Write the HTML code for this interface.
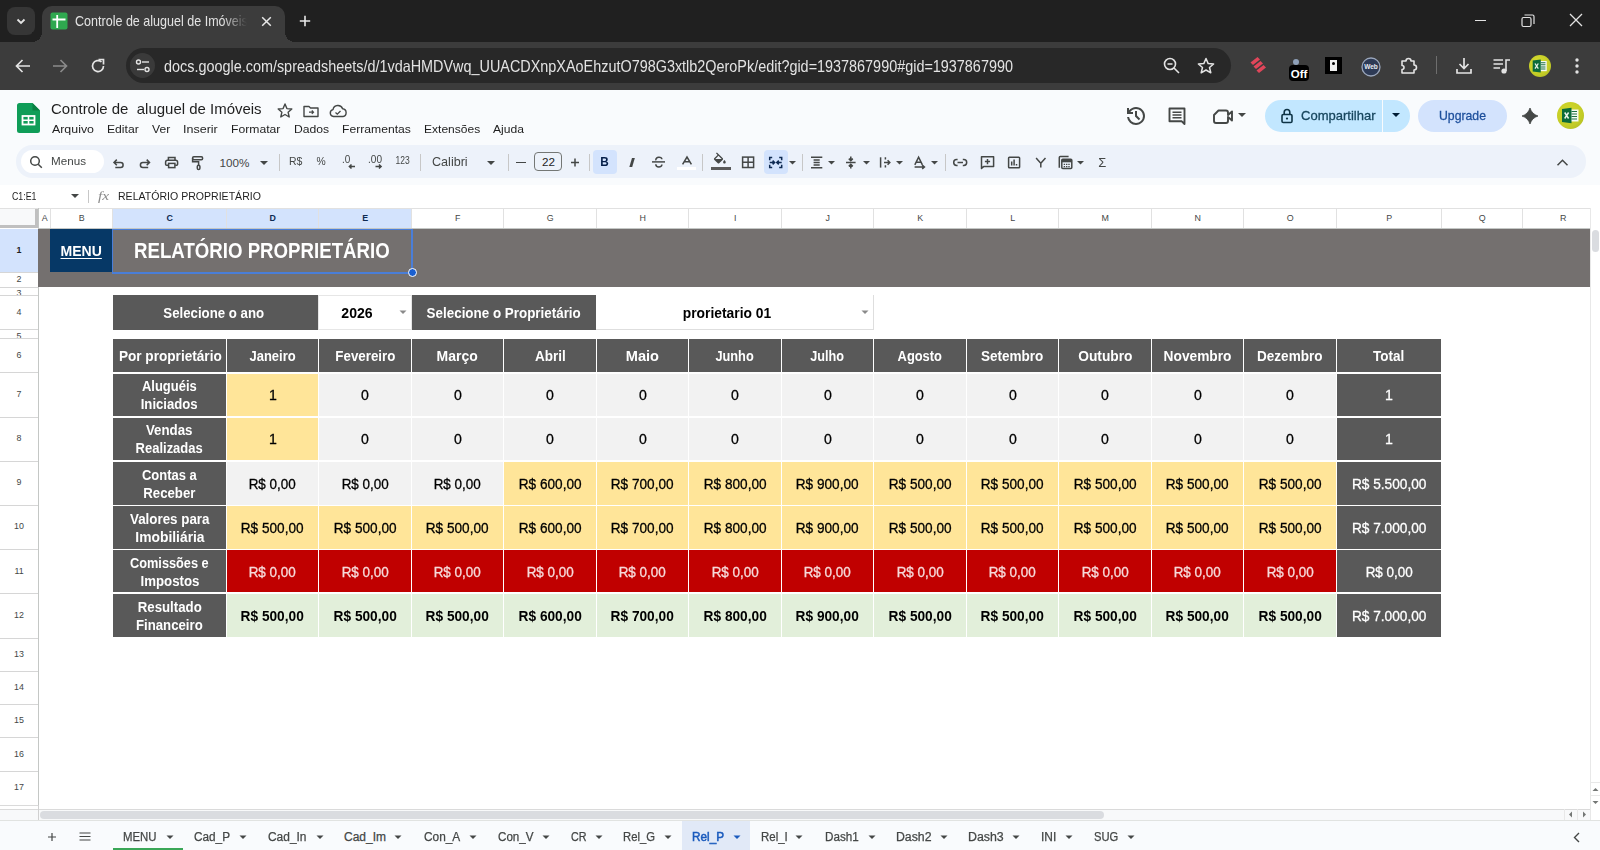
<!DOCTYPE html>
<html><head><meta charset="utf-8"><style>
html,body{margin:0;padding:0;}
body{width:1600px;height:850px;position:relative;overflow:hidden;background:#fff;font-family:"Liberation Sans",sans-serif;}
.a{position:absolute;}
.t{position:absolute;white-space:pre;}
svg{overflow:visible;}
</style></head><body>
<div class="a" style="left:0px;top:0px;width:1600px;height:42px;background:#202020;"></div>
<div class="a" style="left:0px;top:42px;width:1600px;height:48px;background:#3c3c3c;"></div>
<div class="a" style="left:7px;top:7px;width:28px;height:28px;background:#363636;border-radius:8px;"></div>
<svg class="a" style="left:14px;top:14px;" width="14" height="14" viewBox="0 0 14 14"><path d="M3.5 5.5 L7 9 L10.5 5.5" stroke="#e3e3e3" stroke-width="1.8" fill="none"/></svg>
<div class="a" style="left:42px;top:6px;width:243px;height:40px;background:#3c3c3c;border-radius:10px 10px 0 0;"></div>
<div class="a" style="left:32px;top:32px;width:10px;height:10px;background:radial-gradient(circle at 0 0, #202020 10px, #3c3c3c 10px);"></div>
<div class="a" style="left:285px;top:32px;width:10px;height:10px;background:radial-gradient(circle at 10px 0, #202020 10px, #3c3c3c 10px);"></div>
<svg class="a" style="left:50px;top:12px;" width="18" height="18" viewBox="0 0 18 18"><rect x="0.5" y="0.5" width="17" height="17" rx="2" fill="#2fa84f"/><path d="M7.2 3 V16 M2.5 7.5 H15.5" stroke="#fff" stroke-width="1.8"/></svg>
<div class="a" style="left:75px;top:8px;width:172px;height:24px;overflow:hidden;-webkit-mask-image:linear-gradient(90deg,#000 86%,transparent 100%);"><div class="t" style="left:0;top:5.8px;font-size:14.4px;line-height:14.4px;color:#e3e3e3;transform:scaleX(0.8714);transform-origin:left;">Controle de aluguel de Imóveis</div></div>
<svg class="a" style="left:261px;top:15.5px;" width="11" height="11" viewBox="0 0 11 11"><path d="M1.2 1.2 L9.8 9.8 M9.8 1.2 L1.2 9.8" stroke="#e8e8e8" stroke-width="1.5"/></svg>
<svg class="a" style="left:299px;top:15px;" width="12" height="12" viewBox="0 0 12 12"><path d="M6 0.8 V11.2 M0.8 6 H11.2" stroke="#e8e8e8" stroke-width="1.6"/></svg>
<div class="a" style="left:1475px;top:20px;width:11px;height:1.2px;background:#e3e3e3;"></div>
<svg class="a" style="left:1521px;top:14px;" width="14" height="14" viewBox="0 0 14 14"><rect x="1" y="3.5" width="9" height="9" rx="1.5" stroke="#e3e3e3" stroke-width="1.2" fill="none"/><path d="M3.5 1 H11.5 a1.5 1.5 0 0 1 1.5 1.5 V10" stroke="#e3e3e3" stroke-width="1.2" fill="none"/></svg>
<svg class="a" style="left:1569px;top:13px;" width="14" height="14" viewBox="0 0 14 14"><path d="M1 1 L13 13 M13 1 L1 13" stroke="#e3e3e3" stroke-width="1.3"/></svg>
<svg class="a" style="left:13px;top:56px;" width="20" height="20" viewBox="0 0 20 20"><path d="M17 10 H3.5 M9.5 4 L3.5 10 L9.5 16" stroke="#e3e3e3" stroke-width="1.7" fill="none"/></svg>
<svg class="a" style="left:50px;top:56px;" width="20" height="20" viewBox="0 0 20 20"><path d="M3 10 H16.5 M10.5 4 L16.5 10 L10.5 16" stroke="#8a8a8a" stroke-width="1.7" fill="none"/></svg>
<svg class="a" style="left:88px;top:56px;" width="20" height="20" viewBox="0 0 20 20"><path d="M15.5 10 A5.5 5.5 0 1 1 13.5 5.8" stroke="#e3e3e3" stroke-width="1.7" fill="none"/><path d="M10.5 3.5 H15.5 V8.5" stroke="#e3e3e3" stroke-width="1.7" fill="none"/></svg>
<div class="a" style="left:126px;top:48px;width:1105px;height:35px;background:#282828;border-radius:17.5px;"></div>
<div class="a" style="left:130px;top:53px;width:25px;height:25px;border-radius:50%;background:#3a3a3a;"></div>
<svg class="a" style="left:133px;top:56px;" width="20" height="20" viewBox="0 0 20 20"><circle cx="5.5" cy="6" r="2" stroke="#e3e3e3" stroke-width="1.4" fill="none"/><path d="M9 6 H16" stroke="#e3e3e3" stroke-width="1.4"/><circle cx="14" cy="13.5" r="2" stroke="#e3e3e3" stroke-width="1.4" fill="none"/><path d="M4 13.5 H11" stroke="#e3e3e3" stroke-width="1.4"/></svg>
<div class="t " style="left:164.00px;top:58.03px;font-size:16.5px;line-height:16.5px;color:#e3e3e3;transform:scaleX(0.8731);transform-origin:left;">docs.google.com/spreadsheets/d/1vdaHMDVwq_UUACDXnpXAoEhzutO798G3xtlb2QeroPk/edit?gid=1937867990#gid=1937867990</div>
<svg class="a" style="left:1162px;top:56px;" width="20" height="20" viewBox="0 0 20 20"><circle cx="8" cy="8" r="5.5" stroke="#e3e3e3" stroke-width="1.6" fill="none"/><path d="M5.5 8 H10.5 M12 12 L17 17" stroke="#e3e3e3" stroke-width="1.6"/></svg>
<svg class="a" style="left:1196px;top:56px;" width="20" height="20" viewBox="0 0 20 20"><path d="M10 2.5 L12.2 7.6 L17.6 8 L13.5 11.5 L14.8 16.8 L10 14 L5.2 16.8 L6.5 11.5 L2.4 8 L7.8 7.6 Z" stroke="#e3e3e3" stroke-width="1.5" fill="none" stroke-linejoin="round"/></svg>
<svg class="a" style="left:1249px;top:56px;" width="20" height="20" viewBox="0 0 20 20"><g fill="#e0465a"><path d="M1.5 6.5 L8.5 1 L11 3.5 L4 9Z"/><path d="M4.5 10.5 L11.5 5 L14 7.5 L7 13Z"/><path d="M7.5 14.5 L14.5 9 L17 11.5 L10 17Z"/></g></svg>
<svg class="a" style="left:1288px;top:58px;" width="28" height="24" viewBox="0 0 28 24"><circle cx="8" cy="4" r="3" fill="#8ea0b8"/><rect x="1" y="7" width="20" height="16" rx="4" fill="#000"/><text x="11" y="20" font-family="Liberation Sans" font-weight="700" font-size="11.5" fill="#fff" text-anchor="middle">Off</text></svg>
<div class="a" style="left:1325px;top:57px;width:17px;height:17px;background:#000;"></div>
<svg class="a" style="left:1328px;top:59px;" width="11" height="13" viewBox="0 0 11 13"><path d="M2 1 H9 V12 H2 Z" fill="#eee"/><circle cx="5.5" cy="4.5" r="1.5" fill="#000"/></svg>
<svg class="a" style="left:1361px;top:57px;" width="20" height="20" viewBox="0 0 20 20"><circle cx="10" cy="10" r="9" fill="#2d3a55" stroke="#9aa6bb" stroke-width="1.3"/><text x="10" y="12" font-family="Liberation Sans" font-weight="700" font-size="6.5" fill="#e8ecf3" text-anchor="middle">Web</text></svg>
<svg class="a" style="left:1399px;top:56px;" width="22" height="20" viewBox="0 0 22 20"><path d="M3 5 H7 a2.5 2.5 0 0 1 5 0 H15 V9 a2.5 2.5 0 0 1 0 5 V17 H3 V13.5 a2 2 0 0 0 0 -4 Z" stroke="#e3e3e3" stroke-width="1.6" fill="none" stroke-linejoin="round"/></svg>
<div class="a" style="left:1436px;top:56px;width:1px;height:18px;background:#6e6e6e;"></div>
<svg class="a" style="left:1454px;top:56px;" width="20" height="20" viewBox="0 0 20 20"><path d="M10 2 V12 M5.5 8 L10 12.5 L14.5 8" stroke="#e3e3e3" stroke-width="1.7" fill="none"/><path d="M3 13 V17 H17 V13" stroke="#e3e3e3" stroke-width="1.7" fill="none"/></svg>
<svg class="a" style="left:1492px;top:57px;" width="20" height="18" viewBox="0 0 20 18"><path d="M1.5 3 H11 M1.5 7 H11 M1.5 11 H8" stroke="#e3e3e3" stroke-width="1.6"/><circle cx="12" cy="14" r="2.6" fill="#e3e3e3"/><path d="M14 14 V3 H18" stroke="#e3e3e3" stroke-width="1.6" fill="none"/></svg>
<div class="a" style="left:1528.5px;top:55px;width:22px;height:22px;border-radius:50%;background:radial-gradient(circle at 40% 35%, #d8dc30 0%, #c3cc26 60%, #a9b524 100%);"></div>
<svg class="a" style="left:1531px;top:58px;" width="17" height="17" viewBox="0 0 17 17"><g transform="scale(0.85)"><rect x="10" y="3.5" width="8.5" height="12" fill="#f4faf4"/><path d="M11.5 5.5 H17 M11.5 8 H17 M11.5 10.5 H17 M11.5 13 H17" stroke="#1e7145" stroke-width="1.2"/><path d="M2 3 L11.5 1.8 V17.2 L2 16Z" fill="#0b6b3a"/><path d="M4.7 6.5 L8.6 12.5 M8.6 6.5 L4.7 12.5" stroke="#e8f3ea" stroke-width="1.5"/></g></svg>
<svg class="a" style="left:1572px;top:56px;" width="10" height="20" viewBox="0 0 10 20"><circle cx="5" cy="4" r="1.7" fill="#e3e3e3"/><circle cx="5" cy="10" r="1.7" fill="#e3e3e3"/><circle cx="5" cy="16" r="1.7" fill="#e3e3e3"/></svg>
<div class="a" style="left:0px;top:90px;width:1600px;height:118px;background:#f9fbfd;"></div>
<svg class="a" style="left:17px;top:103px;" width="23" height="30" viewBox="0 0 23 30"><path d="M2.5 0 H15.5 L23 7.5 V27.5 A2.5 2.5 0 0 1 20.5 30 H2.5 A2.5 2.5 0 0 1 0 27.5 V2.5 A2.5 2.5 0 0 1 2.5 0Z" fill="#0f9d58"/><path d="M15.5 0 V7.5 H23Z" fill="#0b8043"/><rect x="5.5" y="13" width="12" height="8.5" fill="none" stroke="#fff" stroke-width="1.8"/><path d="M5.5 17.25 H17.5 M11.5 13 V21.5" stroke="#fff" stroke-width="1.6"/></svg>
<div class="t " style="left:51.00px;top:102.24px;font-size:14.6px;line-height:14.6px;color:#1f1f1f;transform:scaleX(1.0261);transform-origin:left;">Controle de  aluguel de Imóveis</div>
<svg class="a" style="left:276px;top:102px;" width="18" height="18" viewBox="0 0 18 18"><path d="M9 2 L10.9 6.6 L15.8 7 L12.1 10.2 L13.2 15 L9 12.5 L4.8 15 L5.9 10.2 L2.2 7 L7.1 6.6Z" stroke="#444746" stroke-width="1.4" fill="none" stroke-linejoin="round"/></svg>
<svg class="a" style="left:302px;top:102px;" width="18" height="18" viewBox="0 0 18 18"><path d="M2 4.5 H7 L8.5 6 H16 V14.5 H2Z" stroke="#444746" stroke-width="1.4" fill="none" stroke-linejoin="round"/><path d="M7 10.2 H11.5 M9.8 8.5 L11.5 10.2 L9.8 11.9" stroke="#444746" stroke-width="1.2" fill="none"/></svg>
<svg class="a" style="left:328px;top:102px;" width="20" height="18" viewBox="0 0 20 18"><path d="M5.5 14.5 A3.5 3.5 0 0 1 5 7.6 A5 5 0 0 1 14.6 6.8 A3.9 3.9 0 0 1 15 14.5Z" stroke="#444746" stroke-width="1.4" fill="none" stroke-linejoin="round"/><path d="M7.5 10.5 L9.3 12.2 L12.5 9" stroke="#444746" stroke-width="1.3" fill="none"/></svg>
<div class="t " style="left:51.70px;top:123.20px;font-size:11.7px;line-height:11.7px;color:#1f1f1f;transform:scaleX(1.0587);transform-origin:left;">Arquivo</div>
<div class="t " style="left:106.90px;top:123.20px;font-size:11.7px;line-height:11.7px;color:#1f1f1f;transform:scaleX(1.0404);transform-origin:left;">Editar</div>
<div class="t " style="left:151.90px;top:123.20px;font-size:11.7px;line-height:11.7px;color:#1f1f1f;transform:scaleX(1.0363);transform-origin:left;">Ver</div>
<div class="t " style="left:183.40px;top:123.20px;font-size:11.7px;line-height:11.7px;color:#1f1f1f;transform:scaleX(1.0705);transform-origin:left;">Inserir</div>
<div class="t " style="left:231.30px;top:123.20px;font-size:11.7px;line-height:11.7px;color:#1f1f1f;transform:scaleX(1.0409);transform-origin:left;">Formatar</div>
<div class="t " style="left:294.30px;top:123.20px;font-size:11.7px;line-height:11.7px;color:#1f1f1f;transform:scaleX(1.0408);transform-origin:left;">Dados</div>
<div class="t " style="left:342.30px;top:123.20px;font-size:11.7px;line-height:11.7px;color:#1f1f1f;transform:scaleX(1.0404);transform-origin:left;">Ferramentas</div>
<div class="t " style="left:424.00px;top:123.20px;font-size:11.7px;line-height:11.7px;color:#1f1f1f;transform:scaleX(1.0305);transform-origin:left;">Extensões</div>
<div class="t " style="left:493.40px;top:123.20px;font-size:11.7px;line-height:11.7px;color:#1f1f1f;transform:scaleX(1.0359);transform-origin:left;">Ajuda</div>
<svg class="a" style="left:1124px;top:104px;" width="24" height="24" viewBox="0 0 24 24"><g transform="translate(0,24) scale(0.025)"><path fill="#444746" d="M480-120q-138 0-240.5-91.5T122-440h82q14 104 92.5 172T480-200q117 0 198.5-81.5T760-480q0-117-81.5-198.5T480-760q-69 0-129 32t-101 88h110v80H120v-240h80v94q51-64 124.5-99T480-840q75 0 140.5 28.5t114 77q48.5 48.5 77 114T840-480q0 75-28.5 140.5t-77 114q-48.5 48.5-114 77T480-120Zm112-192L440-464v-216h80v184l128 128-56 56Z"/></g></svg>
<svg class="a" style="left:1165px;top:104px;" width="24" height="24" viewBox="0 0 24 24"><path d="M4.5 4.5 H19.5 V20 L16.8 17.3 H4.5Z" stroke="#444746" stroke-width="1.9" fill="none" stroke-linejoin="round"/><path d="M7.5 8.2 H16.5 M7.5 11 H16.5 M7.5 13.8 H16.5" stroke="#444746" stroke-width="1.6"/></svg>
<svg class="a" style="left:1211px;top:105px;" width="26" height="22" viewBox="0 0 26 22"><path d="M3 10 L7.5 5.5 H15 a2 2 0 0 1 2 2 V10 L21 6.5 V15.5 L17 12 V16 a2 2 0 0 1 -2 2 H5 a2 2 0 0 1 -2 -2Z" stroke="#444746" stroke-width="1.9" fill="none" stroke-linejoin="round"/></svg>
<svg class="a" style="left:1237px;top:111px;" width="10" height="8" viewBox="0 0 10 8"><path d="M1 2 L5 6 L9 2Z" fill="#444746"/></svg>
<div class="a" style="left:1265px;top:99.5px;width:145px;height:32.5px;background:#c2e7ff;border-radius:16.25px;"></div>
<div class="a" style="left:1382px;top:99.5px;width:1.2px;height:32.5px;background:#f9fbfd;"></div>
<svg class="a" style="left:1279px;top:107px;" width="16" height="17" viewBox="0 0 16 17"><rect x="3" y="7.5" width="10" height="8" rx="1.3" stroke="#0e3345" stroke-width="1.6" fill="none"/><path d="M5.2 7.5 V5.3 A2.8 2.8 0 0 1 10.8 5.3 V7.5" stroke="#0e3345" stroke-width="1.6" fill="none"/><circle cx="8" cy="11.6" r="1.1" fill="#0e3345"/></svg>
<div class="t " style="left:1300.60px;top:109.09px;font-size:13.6px;line-height:13.6px;color:#17465e;transform:scaleX(0.9570);transform-origin:left;-webkit-text-stroke:0.3px #17465e;">Compartilhar</div>
<svg class="a" style="left:1391px;top:112px;" width="10" height="7" viewBox="0 0 10 7"><path d="M1 1 L5 5 L9 1Z" fill="#001d35"/></svg>
<div class="a" style="left:1418px;top:99.5px;width:89px;height:32.5px;background:#d3e3fd;border-radius:16.25px;"></div>
<div class="t " style="left:1439.00px;top:109.49px;font-size:13.6px;line-height:13.6px;color:#1d4f9c;transform:scaleX(0.9009);transform-origin:left;-webkit-text-stroke:0.3px #1d4f9c;">Upgrade</div>
<svg class="a" style="left:1519px;top:105px;" width="22" height="22" viewBox="0 0 22 22"><path d="M11 3 Q12.9 9.1 19 11 Q12.9 12.9 11 19 Q9.1 12.9 3 11 Q9.1 9.1 11 3Z" fill="#444746" stroke="#444746" stroke-width="0.8" stroke-linejoin="round"/></svg>
<div class="a" style="left:1556.5px;top:102px;width:27px;height:27px;border-radius:50%;background:radial-gradient(circle at 40% 35%, #d4d82c 0%, #c3cc26 60%, #a9b524 100%);"></div>
<svg class="a" style="left:1560px;top:106px;" width="20" height="20" viewBox="0 0 20 20"><rect x="10" y="3.5" width="8.5" height="12" fill="#f4faf4"/><path d="M11.5 5.5 H17 M11.5 8 H17 M11.5 10.5 H17 M11.5 13 H17" stroke="#1e7145" stroke-width="1.2"/><path d="M2 3 L11.5 1.8 V17.2 L2 16Z" fill="#0b6b3a"/><path d="M4.7 6.5 L8.6 12.5 M8.6 6.5 L4.7 12.5" stroke="#e8f3ea" stroke-width="1.5"/></svg>
<div class="a" style="left:16px;top:145px;width:1570px;height:32.5px;background:#edf2fa;border-radius:16.25px;"></div>
<div class="a" style="left:21px;top:150px;width:82.6px;height:23px;background:#ffffff;border-radius:11.5px;"></div>
<div class="t " style="left:51.00px;top:155.10px;font-size:11.7px;line-height:11.7px;color:#444746;transform:scaleX(0.9966);transform-origin:left;">Menus</div>
<div class="t " style="left:219.40px;top:156.70px;font-size:11.7px;line-height:11.7px;color:#444746;">100%</div>
<svg class="a" style="left:259.3px;top:159.5px;" width="10" height="6" viewBox="0 0 10 6"><path d="M1 1 L5 5 L9 1Z" fill="#444746"/></svg>
<div class="t " style="left:288.50px;top:155.55px;font-size:11.4px;line-height:11.4px;color:#444746;transform:scaleX(0.9195);transform-origin:left;">R$</div>
<div class="t " style="left:316.43px;top:155.55px;font-size:11.4px;line-height:11.4px;color:#444746;transform:scaleX(0.9076);transform-origin:center;">%</div>
<div class="t " style="left:341.50px;top:154.31px;font-size:10.5px;line-height:10.5px;color:#444746;transform:scaleX(0.9478);transform-origin:left;">.0</div>
<div class="t " style="left:368.00px;top:154.31px;font-size:10.5px;line-height:10.5px;color:#444746;transform:scaleX(0.9591);transform-origin:left;">.00</div>
<div class="t " style="left:393.91px;top:156.48px;font-size:10.3px;line-height:10.3px;color:#444746;transform:scaleX(0.8263);transform-origin:center;">123</div>
<div class="t " style="left:432.30px;top:156.27px;font-size:12.2px;line-height:12.2px;color:#444746;transform:scaleX(1.0325);transform-origin:left;">Calibri</div>
<svg class="a" style="left:486.2px;top:159.5px;" width="10" height="6" viewBox="0 0 10 6"><path d="M1 1 L5 5 L9 1Z" fill="#444746"/></svg>
<div class="a" style="left:278.5px;top:154px;width:1px;height:17px;background:#c7c7c7;"></div>
<div class="a" style="left:420px;top:154px;width:1px;height:17px;background:#c7c7c7;"></div>
<div class="a" style="left:508px;top:154px;width:1px;height:17px;background:#c7c7c7;"></div>
<div class="a" style="left:588.5px;top:154px;width:1px;height:17px;background:#c7c7c7;"></div>
<div class="a" style="left:702px;top:154px;width:1px;height:17px;background:#c7c7c7;"></div>
<div class="a" style="left:801.6px;top:154px;width:1px;height:17px;background:#c7c7c7;"></div>
<div class="a" style="left:944.7px;top:154px;width:1px;height:17px;background:#c7c7c7;"></div>
<div class="a" style="left:516px;top:161.8px;width:10px;height:1.4px;background:#444746;"></div>
<div class="a" style="left:534.3px;top:151.9px;width:28px;height:19.5px;border:1px solid #747775;border-radius:4px;box-sizing:border-box;"></div>
<div class="t " style="left:541.99px;top:156.40px;font-size:11.7px;line-height:11.7px;color:#1f1f1f;">22</div>
<div class="a" style="left:592.6px;top:149.8px;width:24.4px;height:24.2px;background:#d3e3fd;border-radius:4px;"></div>
<div class="t " style="left:599.99px;top:156.02px;font-size:12.5px;line-height:12.5px;color:#041e49;font-weight:700;transform:scaleX(0.9416);transform-origin:center;">B</div>
<div class="t " style="left:629.99px;top:155.80px;font-size:13px;line-height:13px;color:#444746;font-weight:700;transform:scaleX(1.5229);transform-origin:center;font-style:italic;">I</div>
<div class="a" style="left:763.8px;top:149.8px;width:24.2px;height:24.2px;background:#d3e3fd;border-radius:4px;"></div>
<div class="a" style="left:677px;top:167px;width:19px;height:2.5px;background:#ffffff;"></div>
<div class="a" style="left:711px;top:167.3px;width:19.5px;height:2.4px;background:#595959;"></div>
<div class="t " style="left:1098.33px;top:156.37px;font-size:13.5px;line-height:13.5px;color:#444746;transform:scaleX(0.9586);transform-origin:center;">Σ</div>
<svg class="a" style="left:0;top:0;" width="1600" height="200" viewBox="0 0 1600 200">
<circle cx="35" cy="161" r="4.3" stroke="#444746" fill="none" stroke-width="1.5" stroke-width="1.7"/><path d="M38.2 164.2 L41.8 167.8" stroke="#444746" fill="none" stroke-width="1.5" stroke-width="1.8"/>
<path d="M115.3 167.4 H120.6 A2.5 2.5 0 0 0 120.6 162.4 H114 M116.8 159.6 L114 162.4 L116.8 165.2" stroke="#444746" fill="none" stroke-width="1.5"/>
<path d="M148.2 167.4 H142.9 A2.5 2.5 0 0 1 142.9 162.4 H149.5 M146.7 159.6 L149.5 162.4 L146.7 165.2" stroke="#444746" fill="none" stroke-width="1.5"/>
<path d="M168.4 160 V157.5 H175 V160" stroke="#444746" fill="none" stroke-width="1.5"/>
<path d="M168.2 165.3 H166.6 A1 1 0 0 1 165.6 164.3 V162.2 A2 2 0 0 1 167.6 160.2 H175.6 A2 2 0 0 1 177.6 162.2 V164.3 A1 1 0 0 1 176.6 165.3 H175.2" stroke="#444746" fill="none" stroke-width="1.5"/>
<rect x="168.6" y="163.4" width="6.3" height="4.2" stroke="#444746" fill="none" stroke-width="1.5"/>
<rect x="192.6" y="156.7" width="10" height="3" rx="1.2" stroke="#444746" fill="none" stroke-width="1.5"/>
<path d="M192.6 158.2 V161.8 H198.6 V165" stroke="#444746" fill="none" stroke-width="1.5"/>
<rect x="197.3" y="165.2" width="2.6" height="4.3" rx="1.3" stroke="#444746" fill="none" stroke-width="1.5" stroke-width="1.4"/>
<path d="M652 161.9 H665" stroke="#444746" fill="none" stroke-width="1.5" stroke-width="1.4"/>
<path d="M655.8 160.3 C655.4 156.6 661.9 156.4 661.9 159.3 M655.8 164.3 C655.8 167.8 661.9 167.8 661.9 164.5" stroke="#444746" fill="none" stroke-width="1.5" stroke-width="1.4"/>
<path d="M682.6 164.3 L687 157 L691.4 164.3 M684.1 161.8 H689.9" stroke="#444746" fill="none" stroke-width="1.5" stroke-width="1.6"/>
<g transform="translate(711.9,152.4) scale(0.66)"><path fill="#444746" d="M16.56 8.94L7.62 0 6.21 1.41l2.38 2.38-5.15 5.15c-.59.59-.59 1.54 0 2.12l5.5 5.5c.29.29.68.44 1.06.44s.77-.15 1.06-.44l5.5-5.5c.59-.58.59-1.53 0-2.12zM5.21 10L10 5.21 14.79 10H5.21zM19 11.5s-2 2.17-2 3.5c0 1.1.9 2 2 2s2-.9 2-2c0-1.33-2-3.5-2-3.5z"/></g>
<rect x="742.6" y="157.1" width="11" height="10.4" stroke="#444746" fill="none" stroke-width="1.5" stroke-width="1.4"/><path d="M748.1 157.1 V167.5 M742.6 162.3 H753.6" stroke="#444746" fill="none" stroke-width="1.5" stroke-width="1.4"/>
<path d="M772.2 157.6 H769.7 V160.3 M769.7 164.7 V167.4 H772.2 M779.2 157.6 H781.7 V160.3 M781.7 164.7 V167.4 H779.2" stroke="#0e2a52" fill="none" stroke-width="1.5"/>
<path d="M769.7 162.5 H774.6 M772.6 160.6 L774.6 162.5 L772.6 164.4 M781.7 162.5 H776.8 M778.8 160.6 L776.8 162.5 L778.8 164.4" stroke="#0e2a52" fill="none" stroke-width="1.5" stroke-width="1.4"/>
<path d="M811 157.3 H822.3 M813.6 159.9 H819.7 M813.6 162.5 H819.7 M813.6 165.1 H819.7 M811 167.7 H822.3" stroke="#444746" fill="none" stroke-width="1.5" stroke-width="1.4"/>
<path d="M846 162.5 H855.6" stroke="#444746" fill="none" stroke-width="1.5" stroke-width="1.5"/>
<path d="M850.8 156.5 V160.5 M848.8 158.6 L850.8 160.6 L852.8 158.6 M850.8 168.5 V164.5 M848.8 166.4 L850.8 164.4 L852.8 166.4" stroke="#444746" fill="none" stroke-width="1.5" stroke-width="1.4"/>
<path d="M880.6 157.3 V167.6" stroke="#444746" fill="none" stroke-width="1.5" stroke-width="1.5"/>
<path d="M885.4 157.3 V159.6 M885.4 165.3 V167.6 M884 162.5 H889.8 M887.6 160.3 L889.8 162.5 L887.6 164.7" stroke="#444746" fill="none" stroke-width="1.5" stroke-width="1.4"/>
<path d="M914.8 164.8 L918.6 157.2 L922.4 164.8 M916.1 162.2 H921.1" stroke="#444746" fill="none" stroke-width="1.5" stroke-width="1.4"/>
<path d="M914.6 167 H924.2 M922.2 165.2 L924.4 167 L922.2 168.8" stroke="#444746" fill="none" stroke-width="1.5" stroke-width="1.3"/>
<path d="M957.6 159.6 H956.6 A2.9 2.9 0 0 0 956.6 165.4 H957.6 M962.8 159.6 H963.8 A2.9 2.9 0 0 1 963.8 165.4 H962.8 M957.5 162.5 H963" stroke="#444746" fill="none" stroke-width="1.5" stroke-width="1.6"/>
<path d="M981.5 156.8 H993.6 V166.6 H983.6 L981.5 168.4Z" stroke="#444746" fill="none" stroke-width="1.5" stroke-width="1.5" stroke-linejoin="round"/><path d="M987.5 159 V164.2 M984.9 161.6 H990.1" stroke="#444746" fill="none" stroke-width="1.5" stroke-width="1.4"/>
<rect x="1008.6" y="157.3" width="11" height="10.4" rx="0.8" stroke="#444746" fill="none" stroke-width="1.5" stroke-width="1.5"/><path d="M1011.7 165.4 V161.6 M1014.1 165.4 V159.6 M1016.5 165.4 V164" stroke="#444746" fill="none" stroke-width="1.5" stroke-width="1.3"/>
<path d="M1036.1 158.1 L1040.8 163.2 V167.4 M1045.5 158.1 L1040.8 163.2" stroke="#444746" fill="none" stroke-width="1.5" stroke-width="1.6"/>
<path d="M1059.3 167.8 V157.6 A1 1 0 0 1 1060.3 156.6 H1068.6" stroke="#444746" fill="none" stroke-width="1.5" stroke-width="1.2"/>
<rect x="1061.8" y="159.3" width="10" height="9.3" rx="1" stroke="#444746" fill="none" stroke-width="1.5" stroke-width="1.4"/><rect x="1061.8" y="159.3" width="10" height="3" fill="#444746"/>
<path d="M1063.7 164.4 H1070 M1063.7 166.6 H1070" stroke="#444746" stroke-width="1.1" stroke-dasharray="1.4 0.9"/>
<path d="M1557.5 165.3 L1562.5 160.3 L1567.5 165.3" stroke="#444746" fill="none" stroke-width="1.5" stroke-width="1.4"/>
<path d="M349.5 166.5 H355 M351.5 164.5 L349.4 166.5 L351.5 168.5" stroke="#444746" fill="none" stroke-width="1.5" stroke-width="1.3"/>
<path d="M375.5 166.5 H381 M379 164.5 L381.1 166.5 L379 168.5" stroke="#444746" fill="none" stroke-width="1.5" stroke-width="1.3"/>
<path d="M571 162.5 H579 M575 158.5 V166.5" stroke="#444746" fill="none" stroke-width="1.5" stroke-width="1.4"/>
</svg>
<svg class="a" style="left:788.3px;top:159.6px;" width="9" height="6" viewBox="0 0 9 6"><path d="M1 1 L4.5 4.5 L8 1Z" fill="#444746"/></svg>
<svg class="a" style="left:826.5px;top:159.6px;" width="9" height="6" viewBox="0 0 9 6"><path d="M1 1 L4.5 4.5 L8 1Z" fill="#444746"/></svg>
<svg class="a" style="left:861.5px;top:159.6px;" width="9" height="6" viewBox="0 0 9 6"><path d="M1 1 L4.5 4.5 L8 1Z" fill="#444746"/></svg>
<svg class="a" style="left:895.1px;top:159.6px;" width="9" height="6" viewBox="0 0 9 6"><path d="M1 1 L4.5 4.5 L8 1Z" fill="#444746"/></svg>
<svg class="a" style="left:929.5px;top:159.6px;" width="9" height="6" viewBox="0 0 9 6"><path d="M1 1 L4.5 4.5 L8 1Z" fill="#444746"/></svg>
<svg class="a" style="left:1076.0px;top:159.6px;" width="9" height="6" viewBox="0 0 9 6"><path d="M1 1 L4.5 4.5 L8 1Z" fill="#444746"/></svg>
<div class="a" style="left:0px;top:185px;width:1600px;height:23px;background:#ffffff;"></div>
<div class="t " style="left:12.00px;top:190.83px;font-size:10.6px;line-height:10.6px;color:#1f1f1f;transform:scaleX(0.8316);transform-origin:left;">C1:E1</div>
<svg class="a" style="left:70.0px;top:193.0px;" width="10" height="6" viewBox="0 0 10 6"><path d="M1 1 L5 5 L9 1Z" fill="#444746"/></svg>
<div class="a" style="left:88px;top:190px;width:1px;height:13px;background:#c7c7c7;"></div>
<div class="t " style="left:98.00px;top:190.42px;font-size:12.5px;line-height:12.5px;color:#8a8a8a;transform:scaleX(1.2342);transform-origin:left;font-style:italic;font-family:'Liberation Serif',serif;">fx</div>
<div class="t " style="left:118.00px;top:190.18px;font-size:11.6px;line-height:11.6px;color:#1f1f1f;transform:scaleX(0.9105);transform-origin:left;">RELATÓRIO PROPRIETÁRIO</div>
<div class="a" style="left:0px;top:208px;width:1600px;height:612px;background:#ffffff;"></div>
<div class="a" style="left:0px;top:208px;width:1590px;height:1px;background:#e1e1e1;"></div>
<div class="a" style="left:38px;top:209px;width:1552px;height:19px;background:#ffffff;"></div>
<div class="a" style="left:112px;top:209px;width:299px;height:19px;background:#d3e3fd;"></div>
<div class="a" style="left:0px;top:209px;width:38px;height:19px;background:#f8f9fa;"></div>
<div class="a" style="left:34.5px;top:209px;width:3px;height:19px;background:#c0c0c0;"></div>
<div class="a" style="left:0px;top:225px;width:37.5px;height:3.5px;background:#c0c0c0;"></div>
<div class="a" style="left:50px;top:209px;width:1px;height:19px;background:#e1e1e1;"></div>
<div class="a" style="left:112px;top:209px;width:1px;height:19px;background:#e1e1e1;"></div>
<div class="a" style="left:226px;top:209px;width:1px;height:19px;background:#e1e1e1;"></div>
<div class="a" style="left:318px;top:209px;width:1px;height:19px;background:#e1e1e1;"></div>
<div class="a" style="left:411px;top:209px;width:1px;height:19px;background:#e1e1e1;"></div>
<div class="a" style="left:503px;top:209px;width:1px;height:19px;background:#e1e1e1;"></div>
<div class="a" style="left:596px;top:209px;width:1px;height:19px;background:#e1e1e1;"></div>
<div class="a" style="left:688px;top:209px;width:1px;height:19px;background:#e1e1e1;"></div>
<div class="a" style="left:781px;top:209px;width:1px;height:19px;background:#e1e1e1;"></div>
<div class="a" style="left:873px;top:209px;width:1px;height:19px;background:#e1e1e1;"></div>
<div class="a" style="left:966px;top:209px;width:1px;height:19px;background:#e1e1e1;"></div>
<div class="a" style="left:1058px;top:209px;width:1px;height:19px;background:#e1e1e1;"></div>
<div class="a" style="left:1151px;top:209px;width:1px;height:19px;background:#e1e1e1;"></div>
<div class="a" style="left:1243px;top:209px;width:1px;height:19px;background:#e1e1e1;"></div>
<div class="a" style="left:1336px;top:209px;width:1px;height:19px;background:#e1e1e1;"></div>
<div class="a" style="left:1441px;top:209px;width:1px;height:19px;background:#e1e1e1;"></div>
<div class="a" style="left:1522px;top:209px;width:1px;height:19px;background:#e1e1e1;"></div>
<div class="a" style="left:1590px;top:209px;width:1px;height:19px;background:#e1e1e1;"></div>
<div class="a" style="left:38px;top:228px;width:1552px;height:1px;background:#c4c7c5;"></div>
<div class="t " style="left:41.78px;top:214.47px;font-size:8.9px;line-height:8.9px;color:#444746;">A</div>
<div class="t " style="left:78.78px;top:214.47px;font-size:8.9px;line-height:8.9px;color:#444746;">B</div>
<div class="t " style="left:166.54px;top:214.47px;font-size:8.9px;line-height:8.9px;color:#0e2a52;font-weight:700;">C</div>
<div class="t " style="left:269.54px;top:214.47px;font-size:8.9px;line-height:8.9px;color:#0e2a52;font-weight:700;">D</div>
<div class="t " style="left:362.28px;top:214.47px;font-size:8.9px;line-height:8.9px;color:#0e2a52;font-weight:700;">E</div>
<div class="t " style="left:455.03px;top:214.47px;font-size:8.9px;line-height:8.9px;color:#444746;">F</div>
<div class="t " style="left:546.79px;top:214.47px;font-size:8.9px;line-height:8.9px;color:#444746;">G</div>
<div class="t " style="left:639.54px;top:214.47px;font-size:8.9px;line-height:8.9px;color:#444746;">H</div>
<div class="t " style="left:734.01px;top:214.47px;font-size:8.9px;line-height:8.9px;color:#444746;">I</div>
<div class="t " style="left:825.52px;top:214.47px;font-size:8.9px;line-height:8.9px;color:#444746;">J</div>
<div class="t " style="left:917.28px;top:214.47px;font-size:8.9px;line-height:8.9px;color:#444746;">K</div>
<div class="t " style="left:1010.28px;top:214.47px;font-size:8.9px;line-height:8.9px;color:#444746;">L</div>
<div class="t " style="left:1101.54px;top:214.47px;font-size:8.9px;line-height:8.9px;color:#444746;">M</div>
<div class="t " style="left:1194.54px;top:214.47px;font-size:8.9px;line-height:8.9px;color:#444746;">N</div>
<div class="t " style="left:1286.79px;top:214.47px;font-size:8.9px;line-height:8.9px;color:#444746;">O</div>
<div class="t " style="left:1386.28px;top:214.47px;font-size:8.9px;line-height:8.9px;color:#444746;">P</div>
<div class="t " style="left:1478.79px;top:214.47px;font-size:8.9px;line-height:8.9px;color:#444746;">Q</div>
<div class="t " style="left:1560.04px;top:214.47px;font-size:8.9px;line-height:8.9px;color:#444746;">R</div>
<div class="a" style="left:0px;top:228px;width:38px;height:577px;background:#ffffff;"></div>
<div class="a" style="left:0px;top:229px;width:37.5px;height:43px;background:#d3e3fd;"></div>
<div class="a" style="left:37.5px;top:208px;width:1px;height:597px;background:#c4c7c5;"></div>
<div class="a" style="left:0px;top:272px;width:37.5px;height:1px;background:#d6d6d6;"></div>
<div class="t " style="left:16.53px;top:245.67px;font-size:8.9px;line-height:8.9px;color:#1f1f1f;font-weight:700;">1</div>
<div class="a" style="left:0px;top:287px;width:37.5px;height:1px;background:#d6d6d6;"></div>
<div class="t " style="left:16.53px;top:275.17px;font-size:8.9px;line-height:8.9px;color:#444746;">2</div>
<div class="a" style="left:0px;top:295px;width:37.5px;height:1px;background:#d6d6d6;"></div>
<div class="a" style="left:0;top:287px;width:37.5px;height:8px;overflow:hidden;">
<div class="t " style="left:16.53px;top:2.47px;font-size:8.9px;line-height:8.9px;color:#444746;">3</div>
</div>
<div class="a" style="left:0px;top:329px;width:37.5px;height:1px;background:#d6d6d6;"></div>
<div class="t " style="left:16.53px;top:307.67px;font-size:8.9px;line-height:8.9px;color:#444746;">4</div>
<div class="a" style="left:0px;top:338px;width:37.5px;height:1px;background:#d6d6d6;"></div>
<div class="a" style="left:0;top:329px;width:37.5px;height:9px;overflow:hidden;">
<div class="t " style="left:16.53px;top:3.47px;font-size:8.9px;line-height:8.9px;color:#444746;">5</div>
</div>
<div class="a" style="left:0px;top:372px;width:37.5px;height:1px;background:#d6d6d6;"></div>
<div class="t " style="left:16.53px;top:350.67px;font-size:8.9px;line-height:8.9px;color:#444746;">6</div>
<div class="a" style="left:0px;top:416.5px;width:37.5px;height:1px;background:#d6d6d6;"></div>
<div class="t " style="left:16.53px;top:389.92px;font-size:8.9px;line-height:8.9px;color:#444746;">7</div>
<div class="a" style="left:0px;top:460.5px;width:37.5px;height:1px;background:#d6d6d6;"></div>
<div class="t " style="left:16.53px;top:434.17px;font-size:8.9px;line-height:8.9px;color:#444746;">8</div>
<div class="a" style="left:0px;top:504.5px;width:37.5px;height:1px;background:#d6d6d6;"></div>
<div class="t " style="left:16.53px;top:478.17px;font-size:8.9px;line-height:8.9px;color:#444746;">9</div>
<div class="a" style="left:0px;top:549px;width:37.5px;height:1px;background:#d6d6d6;"></div>
<div class="t " style="left:14.05px;top:522.42px;font-size:8.9px;line-height:8.9px;color:#444746;">10</div>
<div class="a" style="left:0px;top:593px;width:37.5px;height:1px;background:#d6d6d6;"></div>
<div class="t " style="left:14.38px;top:566.67px;font-size:8.9px;line-height:8.9px;color:#444746;">11</div>
<div class="a" style="left:0px;top:637.5px;width:37.5px;height:1px;background:#d6d6d6;"></div>
<div class="t " style="left:14.05px;top:610.92px;font-size:8.9px;line-height:8.9px;color:#444746;">12</div>
<div class="a" style="left:0px;top:671px;width:37.5px;height:1px;background:#d6d6d6;"></div>
<div class="t " style="left:14.05px;top:649.92px;font-size:8.9px;line-height:8.9px;color:#444746;">13</div>
<div class="a" style="left:0px;top:704px;width:37.5px;height:1px;background:#d6d6d6;"></div>
<div class="t " style="left:14.05px;top:683.17px;font-size:8.9px;line-height:8.9px;color:#444746;">14</div>
<div class="a" style="left:0px;top:737px;width:37.5px;height:1px;background:#d6d6d6;"></div>
<div class="t " style="left:14.05px;top:716.17px;font-size:8.9px;line-height:8.9px;color:#444746;">15</div>
<div class="a" style="left:0px;top:771px;width:37.5px;height:1px;background:#d6d6d6;"></div>
<div class="t " style="left:14.05px;top:749.67px;font-size:8.9px;line-height:8.9px;color:#444746;">16</div>
<div class="a" style="left:0px;top:804.5px;width:37.5px;height:1px;background:#d6d6d6;"></div>
<div class="t " style="left:14.05px;top:783.42px;font-size:8.9px;line-height:8.9px;color:#444746;">17</div>
<div class="a" style="left:0px;top:838px;width:37.5px;height:1px;background:#d6d6d6;"></div>
<div class="a" style="left:38px;top:229px;width:1552px;height:58px;background:#74706f;"></div>
<div class="a" style="left:50px;top:229.3px;width:62.4px;height:42.5px;background:#063866;"></div>
<div class="t " style="left:60.30px;top:244.31px;font-size:14.4px;line-height:14.4px;color:#ffffff;font-weight:700;transform:scaleX(0.9754);transform-origin:center;text-decoration:underline;text-underline-offset:1.5px;text-decoration-thickness:1.2px;">MENU</div>
<div class="t " style="left:114.43px;top:240.03px;font-size:21.58px;line-height:21.58px;color:#ffffff;font-weight:700;transform:scaleX(0.8643);transform-origin:center;">RELATÓRIO PROPRIETÁRIO</div>
<div class="a" style="left:111.5px;top:228.5px;width:301px;height:45px;border:2px solid #4a7ed8;border-top-width:1px;border-left-width:1.5px;border-bottom-width:2.5px;box-sizing:border-box;"></div>
<div class="a" style="left:407.5px;top:267.5px;width:9px;height:9px;border-radius:50%;background:#1a5fd0;border:1px solid #fff;box-sizing:border-box;"></div>
<div class="a" style="left:113px;top:295px;width:205px;height:34.6px;background:#595959;"></div>
<div class="t " style="left:159.22px;top:306.07px;font-size:14.39px;line-height:14.39px;color:#ffffff;font-weight:700;transform:scaleX(0.9213);transform-origin:center;">Selecione o ano</div>
<div class="a" style="left:318px;top:295px;width:93.5px;height:34.6px;background:#ffffff;border:1px solid #e6e6e6;box-sizing:border-box;"></div>
<div class="t " style="left:340.79px;top:306.07px;font-size:14.39px;line-height:14.39px;color:#000000;font-weight:700;transform:scaleX(0.9798);transform-origin:center;">2026</div>
<svg class="a" style="left:398.5px;top:310.0px;" width="8" height="5" viewBox="0 0 8 5"><path d="M0.5 0.5 L4 4 L7.5 0.5Z" fill="#8a8a8a"/></svg>
<div class="a" style="left:411.7px;top:295px;width:184.5px;height:34.6px;background:#595959;"></div>
<div class="t " style="left:420.73px;top:306.07px;font-size:14.39px;line-height:14.39px;color:#ffffff;font-weight:700;transform:scaleX(0.9321);transform-origin:center;">Selecione o Proprietário</div>
<div class="a" style="left:596px;top:295px;width:278px;height:34.6px;background:#ffffff;border:1px solid #dedede;border-left:none;border-top:none;box-sizing:border-box;"></div>
<div class="t " style="left:680.52px;top:306.07px;font-size:14.39px;line-height:14.39px;color:#000000;font-weight:700;transform:scaleX(0.9629);transform-origin:center;">prorietario 01</div>
<svg class="a" style="left:860.5px;top:310.0px;" width="8" height="5" viewBox="0 0 8 5"><path d="M0.5 0.5 L4 4 L7.5 0.5Z" fill="#8a8a8a"/></svg>
<div class="a" style="left:113px;top:339px;width:1328px;height:298.5px;background:#ffffff;"></div>
<div class="a" style="left:113px;top:339.2px;width:113px;height:32.4px;background:#595959;"></div>
<div class="t " style="left:115.63px;top:349.02px;font-size:14.39px;line-height:14.39px;color:#ffffff;font-weight:700;transform:scaleX(0.9470);transform-origin:center;">Por proprietário</div>
<div class="a" style="left:227px;top:339.2px;width:91px;height:32.4px;background:#595959;"></div>
<div class="t " style="left:246.91px;top:349.02px;font-size:14.39px;line-height:14.39px;color:#ffffff;font-weight:700;transform:scaleX(0.9040);transform-origin:center;">Janeiro</div>
<div class="a" style="left:319px;top:339.2px;width:92px;height:32.4px;background:#595959;"></div>
<div class="t " style="left:332.60px;top:349.02px;font-size:14.39px;line-height:14.39px;color:#ffffff;font-weight:700;transform:scaleX(0.9275);transform-origin:center;">Fevereiro</div>
<div class="a" style="left:412px;top:339.2px;width:91px;height:32.4px;background:#595959;"></div>
<div class="t " style="left:436.31px;top:349.02px;font-size:14.39px;line-height:14.39px;color:#ffffff;font-weight:700;transform:scaleX(0.9710);transform-origin:center;">Março</div>
<div class="a" style="left:504px;top:339.2px;width:92px;height:32.4px;background:#595959;"></div>
<div class="t " style="left:533.61px;top:349.02px;font-size:14.39px;line-height:14.39px;color:#ffffff;font-weight:700;transform:scaleX(0.9389);transform-origin:center;">Abril</div>
<div class="a" style="left:597px;top:339.2px;width:91px;height:32.4px;background:#595959;"></div>
<div class="t " style="left:626.11px;top:349.02px;font-size:14.39px;line-height:14.39px;color:#ffffff;font-weight:700;transform:scaleX(1.0151);transform-origin:center;">Maio</div>
<div class="a" style="left:689px;top:339.2px;width:92px;height:32.4px;background:#595959;"></div>
<div class="t " style="left:713.42px;top:349.02px;font-size:14.39px;line-height:14.39px;color:#ffffff;font-weight:700;transform:scaleX(0.8883);transform-origin:center;">Junho</div>
<div class="a" style="left:782px;top:339.2px;width:91px;height:32.4px;background:#595959;"></div>
<div class="t " style="left:808.31px;top:349.02px;font-size:14.39px;line-height:14.39px;color:#ffffff;font-weight:700;transform:scaleX(0.8819);transform-origin:center;">Julho</div>
<div class="a" style="left:874px;top:339.2px;width:92px;height:32.4px;background:#595959;"></div>
<div class="t " style="left:895.22px;top:349.02px;font-size:14.39px;line-height:14.39px;color:#ffffff;font-weight:700;transform:scaleX(0.8959);transform-origin:center;">Agosto</div>
<div class="a" style="left:967px;top:339.2px;width:91px;height:32.4px;background:#595959;"></div>
<div class="t " style="left:979.31px;top:349.02px;font-size:14.39px;line-height:14.39px;color:#ffffff;font-weight:700;transform:scaleX(0.9412);transform-origin:center;">Setembro</div>
<div class="a" style="left:1059px;top:339.2px;width:92px;height:32.4px;background:#595959;"></div>
<div class="t " style="left:1076.63px;top:349.02px;font-size:14.39px;line-height:14.39px;color:#ffffff;font-weight:700;transform:scaleX(0.9579);transform-origin:center;">Outubro</div>
<div class="a" style="left:1152px;top:339.2px;width:91px;height:32.4px;background:#595959;"></div>
<div class="t " style="left:1161.92px;top:349.02px;font-size:14.39px;line-height:14.39px;color:#ffffff;font-weight:700;transform:scaleX(0.9547);transform-origin:center;">Novembro</div>
<div class="a" style="left:1244px;top:339.2px;width:92px;height:32.4px;background:#595959;"></div>
<div class="t " style="left:1255.22px;top:349.02px;font-size:14.39px;line-height:14.39px;color:#ffffff;font-weight:700;transform:scaleX(0.9423);transform-origin:center;">Dezembro</div>
<div class="a" style="left:1337px;top:339.2px;width:104px;height:32.4px;background:#595959;"></div>
<div class="t " style="left:1372.35px;top:349.02px;font-size:14.39px;line-height:14.39px;color:#ffffff;font-weight:700;transform:scaleX(0.9394);transform-origin:center;">Total</div>
<div class="a" style="left:113px;top:373.8px;width:113px;height:42.0px;background:#595959;"></div>
<div class="a" style="left:227px;top:373.8px;width:91px;height:42.0px;background:#ffe599;"></div>
<div class="a" style="left:319px;top:373.8px;width:92px;height:42.0px;background:#f2f2f2;"></div>
<div class="a" style="left:412px;top:373.8px;width:91px;height:42.0px;background:#f2f2f2;"></div>
<div class="a" style="left:504px;top:373.8px;width:92px;height:42.0px;background:#f2f2f2;"></div>
<div class="a" style="left:597px;top:373.8px;width:91px;height:42.0px;background:#f2f2f2;"></div>
<div class="a" style="left:689px;top:373.8px;width:92px;height:42.0px;background:#f2f2f2;"></div>
<div class="a" style="left:782px;top:373.8px;width:91px;height:42.0px;background:#f2f2f2;"></div>
<div class="a" style="left:874px;top:373.8px;width:92px;height:42.0px;background:#f2f2f2;"></div>
<div class="a" style="left:967px;top:373.8px;width:91px;height:42.0px;background:#f2f2f2;"></div>
<div class="a" style="left:1059px;top:373.8px;width:92px;height:42.0px;background:#f2f2f2;"></div>
<div class="a" style="left:1152px;top:373.8px;width:91px;height:42.0px;background:#f2f2f2;"></div>
<div class="a" style="left:1244px;top:373.8px;width:92px;height:42.0px;background:#f2f2f2;"></div>
<div class="a" style="left:1337px;top:373.8px;width:104px;height:42.0px;background:#595959;"></div>
<div class="t " style="left:139.12px;top:379.22px;font-size:14.39px;line-height:14.39px;color:#ffffff;font-weight:700;transform:scaleX(0.9030);transform-origin:center;">Aluguéis</div>
<div class="t " style="left:138.31px;top:397.22px;font-size:14.39px;line-height:14.39px;color:#ffffff;font-weight:700;transform:scaleX(0.9127);transform-origin:center;">Iniciados</div>
<div class="t " style="left:268.50px;top:388.22px;font-size:14.39px;line-height:14.39px;color:#000000;transform:scaleX(0.9798);transform-origin:center;-webkit-text-stroke:0.3px #000000;">1</div>
<div class="t " style="left:361.00px;top:388.22px;font-size:14.39px;line-height:14.39px;color:#000000;transform:scaleX(0.9798);transform-origin:center;-webkit-text-stroke:0.3px #000000;">0</div>
<div class="t " style="left:453.50px;top:388.22px;font-size:14.39px;line-height:14.39px;color:#000000;transform:scaleX(0.9798);transform-origin:center;-webkit-text-stroke:0.3px #000000;">0</div>
<div class="t " style="left:546.00px;top:388.22px;font-size:14.39px;line-height:14.39px;color:#000000;transform:scaleX(0.9798);transform-origin:center;-webkit-text-stroke:0.3px #000000;">0</div>
<div class="t " style="left:638.50px;top:388.22px;font-size:14.39px;line-height:14.39px;color:#000000;transform:scaleX(0.9798);transform-origin:center;-webkit-text-stroke:0.3px #000000;">0</div>
<div class="t " style="left:731.00px;top:388.22px;font-size:14.39px;line-height:14.39px;color:#000000;transform:scaleX(0.9798);transform-origin:center;-webkit-text-stroke:0.3px #000000;">0</div>
<div class="t " style="left:823.50px;top:388.22px;font-size:14.39px;line-height:14.39px;color:#000000;transform:scaleX(0.9798);transform-origin:center;-webkit-text-stroke:0.3px #000000;">0</div>
<div class="t " style="left:916.00px;top:388.22px;font-size:14.39px;line-height:14.39px;color:#000000;transform:scaleX(0.9798);transform-origin:center;-webkit-text-stroke:0.3px #000000;">0</div>
<div class="t " style="left:1008.50px;top:388.22px;font-size:14.39px;line-height:14.39px;color:#000000;transform:scaleX(0.9798);transform-origin:center;-webkit-text-stroke:0.3px #000000;">0</div>
<div class="t " style="left:1101.00px;top:388.22px;font-size:14.39px;line-height:14.39px;color:#000000;transform:scaleX(0.9798);transform-origin:center;-webkit-text-stroke:0.3px #000000;">0</div>
<div class="t " style="left:1193.50px;top:388.22px;font-size:14.39px;line-height:14.39px;color:#000000;transform:scaleX(0.9798);transform-origin:center;-webkit-text-stroke:0.3px #000000;">0</div>
<div class="t " style="left:1286.00px;top:388.22px;font-size:14.39px;line-height:14.39px;color:#000000;transform:scaleX(0.9798);transform-origin:center;-webkit-text-stroke:0.3px #000000;">0</div>
<div class="t " style="left:1385.00px;top:388.22px;font-size:14.39px;line-height:14.39px;color:#ffffff;transform:scaleX(0.9798);transform-origin:center;-webkit-text-stroke:0.3px #ffffff;">1</div>
<div class="a" style="left:113px;top:417.6px;width:113px;height:42.599999999999966px;background:#595959;"></div>
<div class="a" style="left:227px;top:417.6px;width:91px;height:42.599999999999966px;background:#ffe599;"></div>
<div class="a" style="left:319px;top:417.6px;width:92px;height:42.599999999999966px;background:#f2f2f2;"></div>
<div class="a" style="left:412px;top:417.6px;width:91px;height:42.599999999999966px;background:#f2f2f2;"></div>
<div class="a" style="left:504px;top:417.6px;width:92px;height:42.599999999999966px;background:#f2f2f2;"></div>
<div class="a" style="left:597px;top:417.6px;width:91px;height:42.599999999999966px;background:#f2f2f2;"></div>
<div class="a" style="left:689px;top:417.6px;width:92px;height:42.599999999999966px;background:#f2f2f2;"></div>
<div class="a" style="left:782px;top:417.6px;width:91px;height:42.599999999999966px;background:#f2f2f2;"></div>
<div class="a" style="left:874px;top:417.6px;width:92px;height:42.599999999999966px;background:#f2f2f2;"></div>
<div class="a" style="left:967px;top:417.6px;width:91px;height:42.599999999999966px;background:#f2f2f2;"></div>
<div class="a" style="left:1059px;top:417.6px;width:92px;height:42.599999999999966px;background:#f2f2f2;"></div>
<div class="a" style="left:1152px;top:417.6px;width:91px;height:42.599999999999966px;background:#f2f2f2;"></div>
<div class="a" style="left:1244px;top:417.6px;width:92px;height:42.599999999999966px;background:#f2f2f2;"></div>
<div class="a" style="left:1337px;top:417.6px;width:104px;height:42.599999999999966px;background:#595959;"></div>
<div class="t " style="left:144.30px;top:423.32px;font-size:14.39px;line-height:14.39px;color:#ffffff;font-weight:700;transform:scaleX(0.9238);transform-origin:center;">Vendas</div>
<div class="t " style="left:132.31px;top:441.32px;font-size:14.39px;line-height:14.39px;color:#ffffff;font-weight:700;transform:scaleX(0.9035);transform-origin:center;">Realizadas</div>
<div class="t " style="left:268.50px;top:432.32px;font-size:14.39px;line-height:14.39px;color:#000000;transform:scaleX(0.9798);transform-origin:center;-webkit-text-stroke:0.3px #000000;">1</div>
<div class="t " style="left:361.00px;top:432.32px;font-size:14.39px;line-height:14.39px;color:#000000;transform:scaleX(0.9798);transform-origin:center;-webkit-text-stroke:0.3px #000000;">0</div>
<div class="t " style="left:453.50px;top:432.32px;font-size:14.39px;line-height:14.39px;color:#000000;transform:scaleX(0.9798);transform-origin:center;-webkit-text-stroke:0.3px #000000;">0</div>
<div class="t " style="left:546.00px;top:432.32px;font-size:14.39px;line-height:14.39px;color:#000000;transform:scaleX(0.9798);transform-origin:center;-webkit-text-stroke:0.3px #000000;">0</div>
<div class="t " style="left:638.50px;top:432.32px;font-size:14.39px;line-height:14.39px;color:#000000;transform:scaleX(0.9798);transform-origin:center;-webkit-text-stroke:0.3px #000000;">0</div>
<div class="t " style="left:731.00px;top:432.32px;font-size:14.39px;line-height:14.39px;color:#000000;transform:scaleX(0.9798);transform-origin:center;-webkit-text-stroke:0.3px #000000;">0</div>
<div class="t " style="left:823.50px;top:432.32px;font-size:14.39px;line-height:14.39px;color:#000000;transform:scaleX(0.9798);transform-origin:center;-webkit-text-stroke:0.3px #000000;">0</div>
<div class="t " style="left:916.00px;top:432.32px;font-size:14.39px;line-height:14.39px;color:#000000;transform:scaleX(0.9798);transform-origin:center;-webkit-text-stroke:0.3px #000000;">0</div>
<div class="t " style="left:1008.50px;top:432.32px;font-size:14.39px;line-height:14.39px;color:#000000;transform:scaleX(0.9798);transform-origin:center;-webkit-text-stroke:0.3px #000000;">0</div>
<div class="t " style="left:1101.00px;top:432.32px;font-size:14.39px;line-height:14.39px;color:#000000;transform:scaleX(0.9798);transform-origin:center;-webkit-text-stroke:0.3px #000000;">0</div>
<div class="t " style="left:1193.50px;top:432.32px;font-size:14.39px;line-height:14.39px;color:#000000;transform:scaleX(0.9798);transform-origin:center;-webkit-text-stroke:0.3px #000000;">0</div>
<div class="t " style="left:1286.00px;top:432.32px;font-size:14.39px;line-height:14.39px;color:#000000;transform:scaleX(0.9798);transform-origin:center;-webkit-text-stroke:0.3px #000000;">0</div>
<div class="t " style="left:1385.00px;top:432.32px;font-size:14.39px;line-height:14.39px;color:#ffffff;transform:scaleX(0.9798);transform-origin:center;-webkit-text-stroke:0.3px #ffffff;">1</div>
<div class="a" style="left:113px;top:461.8px;width:113px;height:42.80000000000001px;background:#595959;"></div>
<div class="a" style="left:227px;top:461.8px;width:91px;height:42.80000000000001px;background:#f2f2f2;"></div>
<div class="a" style="left:319px;top:461.8px;width:92px;height:42.80000000000001px;background:#f2f2f2;"></div>
<div class="a" style="left:412px;top:461.8px;width:91px;height:42.80000000000001px;background:#f2f2f2;"></div>
<div class="a" style="left:504px;top:461.8px;width:92px;height:42.80000000000001px;background:#ffe599;"></div>
<div class="a" style="left:597px;top:461.8px;width:91px;height:42.80000000000001px;background:#ffe599;"></div>
<div class="a" style="left:689px;top:461.8px;width:92px;height:42.80000000000001px;background:#ffe599;"></div>
<div class="a" style="left:782px;top:461.8px;width:91px;height:42.80000000000001px;background:#ffe599;"></div>
<div class="a" style="left:874px;top:461.8px;width:92px;height:42.80000000000001px;background:#ffe599;"></div>
<div class="a" style="left:967px;top:461.8px;width:91px;height:42.80000000000001px;background:#ffe599;"></div>
<div class="a" style="left:1059px;top:461.8px;width:92px;height:42.80000000000001px;background:#ffe599;"></div>
<div class="a" style="left:1152px;top:461.8px;width:91px;height:42.80000000000001px;background:#ffe599;"></div>
<div class="a" style="left:1244px;top:461.8px;width:92px;height:42.80000000000001px;background:#ffe599;"></div>
<div class="a" style="left:1337px;top:461.8px;width:104px;height:42.80000000000001px;background:#595959;"></div>
<div class="t " style="left:139.11px;top:467.62px;font-size:14.39px;line-height:14.39px;color:#ffffff;font-weight:700;transform:scaleX(0.9020);transform-origin:center;">Contas a</div>
<div class="t " style="left:141.10px;top:485.62px;font-size:14.39px;line-height:14.39px;color:#ffffff;font-weight:700;transform:scaleX(0.9177);transform-origin:center;">Receber</div>
<div class="t " style="left:247.30px;top:476.62px;font-size:14.39px;line-height:14.39px;color:#000000;transform:scaleX(0.9350);transform-origin:center;-webkit-text-stroke:0.3px #000000;">R$ 0,00</div>
<div class="t " style="left:339.80px;top:476.62px;font-size:14.39px;line-height:14.39px;color:#000000;transform:scaleX(0.9350);transform-origin:center;-webkit-text-stroke:0.3px #000000;">R$ 0,00</div>
<div class="t " style="left:432.30px;top:476.62px;font-size:14.39px;line-height:14.39px;color:#000000;transform:scaleX(0.9350);transform-origin:center;-webkit-text-stroke:0.3px #000000;">R$ 0,00</div>
<div class="t " style="left:516.80px;top:476.62px;font-size:14.39px;line-height:14.39px;color:#000000;transform:scaleX(0.9458);transform-origin:center;-webkit-text-stroke:0.3px #000000;">R$ 600,00</div>
<div class="t " style="left:609.30px;top:476.62px;font-size:14.39px;line-height:14.39px;color:#000000;transform:scaleX(0.9458);transform-origin:center;-webkit-text-stroke:0.3px #000000;">R$ 700,00</div>
<div class="t " style="left:701.80px;top:476.62px;font-size:14.39px;line-height:14.39px;color:#000000;transform:scaleX(0.9458);transform-origin:center;-webkit-text-stroke:0.3px #000000;">R$ 800,00</div>
<div class="t " style="left:794.30px;top:476.62px;font-size:14.39px;line-height:14.39px;color:#000000;transform:scaleX(0.9458);transform-origin:center;-webkit-text-stroke:0.3px #000000;">R$ 900,00</div>
<div class="t " style="left:886.80px;top:476.62px;font-size:14.39px;line-height:14.39px;color:#000000;transform:scaleX(0.9458);transform-origin:center;-webkit-text-stroke:0.3px #000000;">R$ 500,00</div>
<div class="t " style="left:979.30px;top:476.62px;font-size:14.39px;line-height:14.39px;color:#000000;transform:scaleX(0.9458);transform-origin:center;-webkit-text-stroke:0.3px #000000;">R$ 500,00</div>
<div class="t " style="left:1071.80px;top:476.62px;font-size:14.39px;line-height:14.39px;color:#000000;transform:scaleX(0.9458);transform-origin:center;-webkit-text-stroke:0.3px #000000;">R$ 500,00</div>
<div class="t " style="left:1164.30px;top:476.62px;font-size:14.39px;line-height:14.39px;color:#000000;transform:scaleX(0.9458);transform-origin:center;-webkit-text-stroke:0.3px #000000;">R$ 500,00</div>
<div class="t " style="left:1256.80px;top:476.62px;font-size:14.39px;line-height:14.39px;color:#000000;transform:scaleX(0.9458);transform-origin:center;-webkit-text-stroke:0.3px #000000;">R$ 500,00</div>
<div class="t " style="left:1349.80px;top:476.62px;font-size:14.39px;line-height:14.39px;color:#ffffff;transform:scaleX(0.9508);transform-origin:center;-webkit-text-stroke:0.3px #ffffff;">R$ 5.500,00</div>
<div class="a" style="left:113px;top:506px;width:113px;height:42.89999999999998px;background:#595959;"></div>
<div class="a" style="left:227px;top:506px;width:91px;height:42.89999999999998px;background:#ffe599;"></div>
<div class="a" style="left:319px;top:506px;width:92px;height:42.89999999999998px;background:#ffe599;"></div>
<div class="a" style="left:412px;top:506px;width:91px;height:42.89999999999998px;background:#ffe599;"></div>
<div class="a" style="left:504px;top:506px;width:92px;height:42.89999999999998px;background:#ffe599;"></div>
<div class="a" style="left:597px;top:506px;width:91px;height:42.89999999999998px;background:#ffe599;"></div>
<div class="a" style="left:689px;top:506px;width:92px;height:42.89999999999998px;background:#ffe599;"></div>
<div class="a" style="left:782px;top:506px;width:91px;height:42.89999999999998px;background:#ffe599;"></div>
<div class="a" style="left:874px;top:506px;width:92px;height:42.89999999999998px;background:#ffe599;"></div>
<div class="a" style="left:967px;top:506px;width:91px;height:42.89999999999998px;background:#ffe599;"></div>
<div class="a" style="left:1059px;top:506px;width:92px;height:42.89999999999998px;background:#ffe599;"></div>
<div class="a" style="left:1152px;top:506px;width:91px;height:42.89999999999998px;background:#ffe599;"></div>
<div class="a" style="left:1244px;top:506px;width:92px;height:42.89999999999998px;background:#ffe599;"></div>
<div class="a" style="left:1337px;top:506px;width:104px;height:42.89999999999998px;background:#595959;"></div>
<div class="t " style="left:126.70px;top:511.87px;font-size:14.39px;line-height:14.39px;color:#ffffff;font-weight:700;transform:scaleX(0.9295);transform-origin:center;">Valores para</div>
<div class="t " style="left:133.51px;top:529.87px;font-size:14.39px;line-height:14.39px;color:#ffffff;font-weight:700;transform:scaleX(0.9629);transform-origin:center;">Imobiliária</div>
<div class="t " style="left:239.30px;top:520.87px;font-size:14.39px;line-height:14.39px;color:#000000;transform:scaleX(0.9458);transform-origin:center;-webkit-text-stroke:0.3px #000000;">R$ 500,00</div>
<div class="t " style="left:331.80px;top:520.87px;font-size:14.39px;line-height:14.39px;color:#000000;transform:scaleX(0.9458);transform-origin:center;-webkit-text-stroke:0.3px #000000;">R$ 500,00</div>
<div class="t " style="left:424.30px;top:520.87px;font-size:14.39px;line-height:14.39px;color:#000000;transform:scaleX(0.9458);transform-origin:center;-webkit-text-stroke:0.3px #000000;">R$ 500,00</div>
<div class="t " style="left:516.80px;top:520.87px;font-size:14.39px;line-height:14.39px;color:#000000;transform:scaleX(0.9458);transform-origin:center;-webkit-text-stroke:0.3px #000000;">R$ 600,00</div>
<div class="t " style="left:609.30px;top:520.87px;font-size:14.39px;line-height:14.39px;color:#000000;transform:scaleX(0.9458);transform-origin:center;-webkit-text-stroke:0.3px #000000;">R$ 700,00</div>
<div class="t " style="left:701.80px;top:520.87px;font-size:14.39px;line-height:14.39px;color:#000000;transform:scaleX(0.9458);transform-origin:center;-webkit-text-stroke:0.3px #000000;">R$ 800,00</div>
<div class="t " style="left:794.30px;top:520.87px;font-size:14.39px;line-height:14.39px;color:#000000;transform:scaleX(0.9458);transform-origin:center;-webkit-text-stroke:0.3px #000000;">R$ 900,00</div>
<div class="t " style="left:886.80px;top:520.87px;font-size:14.39px;line-height:14.39px;color:#000000;transform:scaleX(0.9458);transform-origin:center;-webkit-text-stroke:0.3px #000000;">R$ 500,00</div>
<div class="t " style="left:979.30px;top:520.87px;font-size:14.39px;line-height:14.39px;color:#000000;transform:scaleX(0.9458);transform-origin:center;-webkit-text-stroke:0.3px #000000;">R$ 500,00</div>
<div class="t " style="left:1071.80px;top:520.87px;font-size:14.39px;line-height:14.39px;color:#000000;transform:scaleX(0.9458);transform-origin:center;-webkit-text-stroke:0.3px #000000;">R$ 500,00</div>
<div class="t " style="left:1164.30px;top:520.87px;font-size:14.39px;line-height:14.39px;color:#000000;transform:scaleX(0.9458);transform-origin:center;-webkit-text-stroke:0.3px #000000;">R$ 500,00</div>
<div class="t " style="left:1256.80px;top:520.87px;font-size:14.39px;line-height:14.39px;color:#000000;transform:scaleX(0.9458);transform-origin:center;-webkit-text-stroke:0.3px #000000;">R$ 500,00</div>
<div class="t " style="left:1349.80px;top:520.87px;font-size:14.39px;line-height:14.39px;color:#ffffff;transform:scaleX(0.9508);transform-origin:center;-webkit-text-stroke:0.3px #ffffff;">R$ 7.000,00</div>
<div class="a" style="left:113px;top:550.3px;width:113px;height:42.200000000000045px;background:#595959;"></div>
<div class="a" style="left:227px;top:550.3px;width:91px;height:42.200000000000045px;background:#c00000;"></div>
<div class="a" style="left:319px;top:550.3px;width:92px;height:42.200000000000045px;background:#c00000;"></div>
<div class="a" style="left:412px;top:550.3px;width:91px;height:42.200000000000045px;background:#c00000;"></div>
<div class="a" style="left:504px;top:550.3px;width:92px;height:42.200000000000045px;background:#c00000;"></div>
<div class="a" style="left:597px;top:550.3px;width:91px;height:42.200000000000045px;background:#c00000;"></div>
<div class="a" style="left:689px;top:550.3px;width:92px;height:42.200000000000045px;background:#c00000;"></div>
<div class="a" style="left:782px;top:550.3px;width:91px;height:42.200000000000045px;background:#c00000;"></div>
<div class="a" style="left:874px;top:550.3px;width:92px;height:42.200000000000045px;background:#c00000;"></div>
<div class="a" style="left:967px;top:550.3px;width:91px;height:42.200000000000045px;background:#c00000;"></div>
<div class="a" style="left:1059px;top:550.3px;width:92px;height:42.200000000000045px;background:#c00000;"></div>
<div class="a" style="left:1152px;top:550.3px;width:91px;height:42.200000000000045px;background:#c00000;"></div>
<div class="a" style="left:1244px;top:550.3px;width:92px;height:42.200000000000045px;background:#c00000;"></div>
<div class="a" style="left:1337px;top:550.3px;width:104px;height:42.200000000000045px;background:#595959;"></div>
<div class="t " style="left:125.11px;top:555.82px;font-size:14.39px;line-height:14.39px;color:#ffffff;font-weight:700;transform:scaleX(0.8875);transform-origin:center;">Comissões e</div>
<div class="t " style="left:137.52px;top:573.82px;font-size:14.39px;line-height:14.39px;color:#ffffff;font-weight:700;transform:scaleX(0.9228);transform-origin:center;">Impostos</div>
<div class="t " style="left:247.30px;top:564.82px;font-size:14.39px;line-height:14.39px;color:#f6d9d9;transform:scaleX(0.9350);transform-origin:center;-webkit-text-stroke:0.3px #f6d9d9;">R$ 0,00</div>
<div class="t " style="left:339.80px;top:564.82px;font-size:14.39px;line-height:14.39px;color:#f6d9d9;transform:scaleX(0.9350);transform-origin:center;-webkit-text-stroke:0.3px #f6d9d9;">R$ 0,00</div>
<div class="t " style="left:432.30px;top:564.82px;font-size:14.39px;line-height:14.39px;color:#f6d9d9;transform:scaleX(0.9350);transform-origin:center;-webkit-text-stroke:0.3px #f6d9d9;">R$ 0,00</div>
<div class="t " style="left:524.80px;top:564.82px;font-size:14.39px;line-height:14.39px;color:#f6d9d9;transform:scaleX(0.9350);transform-origin:center;-webkit-text-stroke:0.3px #f6d9d9;">R$ 0,00</div>
<div class="t " style="left:617.30px;top:564.82px;font-size:14.39px;line-height:14.39px;color:#f6d9d9;transform:scaleX(0.9350);transform-origin:center;-webkit-text-stroke:0.3px #f6d9d9;">R$ 0,00</div>
<div class="t " style="left:709.80px;top:564.82px;font-size:14.39px;line-height:14.39px;color:#f6d9d9;transform:scaleX(0.9350);transform-origin:center;-webkit-text-stroke:0.3px #f6d9d9;">R$ 0,00</div>
<div class="t " style="left:802.30px;top:564.82px;font-size:14.39px;line-height:14.39px;color:#f6d9d9;transform:scaleX(0.9350);transform-origin:center;-webkit-text-stroke:0.3px #f6d9d9;">R$ 0,00</div>
<div class="t " style="left:894.80px;top:564.82px;font-size:14.39px;line-height:14.39px;color:#f6d9d9;transform:scaleX(0.9350);transform-origin:center;-webkit-text-stroke:0.3px #f6d9d9;">R$ 0,00</div>
<div class="t " style="left:987.30px;top:564.82px;font-size:14.39px;line-height:14.39px;color:#f6d9d9;transform:scaleX(0.9350);transform-origin:center;-webkit-text-stroke:0.3px #f6d9d9;">R$ 0,00</div>
<div class="t " style="left:1079.80px;top:564.82px;font-size:14.39px;line-height:14.39px;color:#f6d9d9;transform:scaleX(0.9350);transform-origin:center;-webkit-text-stroke:0.3px #f6d9d9;">R$ 0,00</div>
<div class="t " style="left:1172.30px;top:564.82px;font-size:14.39px;line-height:14.39px;color:#f6d9d9;transform:scaleX(0.9350);transform-origin:center;-webkit-text-stroke:0.3px #f6d9d9;">R$ 0,00</div>
<div class="t " style="left:1264.80px;top:564.82px;font-size:14.39px;line-height:14.39px;color:#f6d9d9;transform:scaleX(0.9350);transform-origin:center;-webkit-text-stroke:0.3px #f6d9d9;">R$ 0,00</div>
<div class="t " style="left:1363.80px;top:564.82px;font-size:14.39px;line-height:14.39px;color:#ffffff;transform:scaleX(0.9350);transform-origin:center;-webkit-text-stroke:0.3px #ffffff;">R$ 0,00</div>
<div class="a" style="left:113px;top:594px;width:113px;height:43.200000000000045px;background:#595959;"></div>
<div class="a" style="left:227px;top:594px;width:91px;height:43.200000000000045px;background:#e2efda;"></div>
<div class="a" style="left:319px;top:594px;width:92px;height:43.200000000000045px;background:#e2efda;"></div>
<div class="a" style="left:412px;top:594px;width:91px;height:43.200000000000045px;background:#e2efda;"></div>
<div class="a" style="left:504px;top:594px;width:92px;height:43.200000000000045px;background:#e2efda;"></div>
<div class="a" style="left:597px;top:594px;width:91px;height:43.200000000000045px;background:#e2efda;"></div>
<div class="a" style="left:689px;top:594px;width:92px;height:43.200000000000045px;background:#e2efda;"></div>
<div class="a" style="left:782px;top:594px;width:91px;height:43.200000000000045px;background:#e2efda;"></div>
<div class="a" style="left:874px;top:594px;width:92px;height:43.200000000000045px;background:#e2efda;"></div>
<div class="a" style="left:967px;top:594px;width:91px;height:43.200000000000045px;background:#e2efda;"></div>
<div class="a" style="left:1059px;top:594px;width:92px;height:43.200000000000045px;background:#e2efda;"></div>
<div class="a" style="left:1152px;top:594px;width:91px;height:43.200000000000045px;background:#e2efda;"></div>
<div class="a" style="left:1244px;top:594px;width:92px;height:43.200000000000045px;background:#e2efda;"></div>
<div class="a" style="left:1337px;top:594px;width:104px;height:43.200000000000045px;background:#595959;"></div>
<div class="t " style="left:134.72px;top:600.02px;font-size:14.39px;line-height:14.39px;color:#ffffff;font-weight:700;transform:scaleX(0.9202);transform-origin:center;">Resultado</div>
<div class="t " style="left:133.12px;top:618.02px;font-size:14.39px;line-height:14.39px;color:#ffffff;font-weight:700;transform:scaleX(0.9184);transform-origin:center;">Financeiro</div>
<div class="t " style="left:239.30px;top:609.02px;font-size:14.39px;line-height:14.39px;color:#000000;font-weight:700;transform:scaleX(0.9524);transform-origin:center;">R$ 500,00</div>
<div class="t " style="left:331.80px;top:609.02px;font-size:14.39px;line-height:14.39px;color:#000000;font-weight:700;transform:scaleX(0.9524);transform-origin:center;">R$ 500,00</div>
<div class="t " style="left:424.30px;top:609.02px;font-size:14.39px;line-height:14.39px;color:#000000;font-weight:700;transform:scaleX(0.9524);transform-origin:center;">R$ 500,00</div>
<div class="t " style="left:516.80px;top:609.02px;font-size:14.39px;line-height:14.39px;color:#000000;font-weight:700;transform:scaleX(0.9524);transform-origin:center;">R$ 600,00</div>
<div class="t " style="left:609.30px;top:609.02px;font-size:14.39px;line-height:14.39px;color:#000000;font-weight:700;transform:scaleX(0.9524);transform-origin:center;">R$ 700,00</div>
<div class="t " style="left:701.80px;top:609.02px;font-size:14.39px;line-height:14.39px;color:#000000;font-weight:700;transform:scaleX(0.9524);transform-origin:center;">R$ 800,00</div>
<div class="t " style="left:794.30px;top:609.02px;font-size:14.39px;line-height:14.39px;color:#000000;font-weight:700;transform:scaleX(0.9524);transform-origin:center;">R$ 900,00</div>
<div class="t " style="left:886.80px;top:609.02px;font-size:14.39px;line-height:14.39px;color:#000000;font-weight:700;transform:scaleX(0.9524);transform-origin:center;">R$ 500,00</div>
<div class="t " style="left:979.30px;top:609.02px;font-size:14.39px;line-height:14.39px;color:#000000;font-weight:700;transform:scaleX(0.9524);transform-origin:center;">R$ 500,00</div>
<div class="t " style="left:1071.80px;top:609.02px;font-size:14.39px;line-height:14.39px;color:#000000;font-weight:700;transform:scaleX(0.9524);transform-origin:center;">R$ 500,00</div>
<div class="t " style="left:1164.30px;top:609.02px;font-size:14.39px;line-height:14.39px;color:#000000;font-weight:700;transform:scaleX(0.9524);transform-origin:center;">R$ 500,00</div>
<div class="t " style="left:1256.80px;top:609.02px;font-size:14.39px;line-height:14.39px;color:#000000;font-weight:700;transform:scaleX(0.9524);transform-origin:center;">R$ 500,00</div>
<div class="t " style="left:1349.80px;top:609.02px;font-size:14.39px;line-height:14.39px;color:#ffffff;transform:scaleX(0.9508);transform-origin:center;-webkit-text-stroke:0.3px #ffffff;">R$ 7.000,00</div>
<div class="a" style="left:0px;top:804.5px;width:1590px;height:5px;background:#ffffff;"></div>
<div class="a" style="left:0px;top:804.5px;width:37.5px;height:1px;background:#dadada;"></div>
<div class="a" style="left:0px;top:809px;width:1590px;height:11px;background:#f8f9fa;"></div>
<div class="a" style="left:0px;top:809px;width:1590px;height:1px;background:#dadada;"></div>
<div class="a" style="left:37.5px;top:804.5px;width:1px;height:16px;background:#d0d0d0;"></div>
<div class="a" style="left:40px;top:811px;width:1064px;height:7.5px;background:#dadce0;border-radius:4px;"></div>
<div class="a" style="left:1590px;top:208px;width:10px;height:612px;background:#ffffff;"></div>
<div class="a" style="left:1590px;top:208px;width:1px;height:612px;background:#e8e8e8;"></div>
<div class="a" style="left:1592px;top:230px;width:7px;height:22px;background:#dadce0;border-radius:4px;"></div>
<div class="a" style="left:1590px;top:782px;width:10px;height:1px;background:#e8e8e8;"></div>
<div class="a" style="left:1590px;top:795px;width:10px;height:1px;background:#e8e8e8;"></div>
<svg class="a" style="left:1591.5px;top:786.5px;" width="7" height="5" viewBox="0 0 7 5"><path d="M0.5 4 L3.5 1 L6.5 4Z" fill="#747775"/></svg>
<svg class="a" style="left:1591.5px;top:800.0px;" width="7" height="5" viewBox="0 0 7 5"><path d="M0.5 1 L3.5 4 L6.5 1Z" fill="#747775"/></svg>
<div class="a" style="left:1564px;top:809px;width:1px;height:11px;background:#e8e8e8;"></div>
<div class="a" style="left:1577px;top:809px;width:1px;height:11px;background:#e8e8e8;"></div>
<svg class="a" style="left:1568.0px;top:811.0px;" width="5" height="7" viewBox="0 0 5 7"><path d="M4 0.5 L1 3.5 L4 6.5Z" fill="#747775"/></svg>
<svg class="a" style="left:1581.5px;top:811.0px;" width="5" height="7" viewBox="0 0 5 7"><path d="M1 0.5 L4 3.5 L1 6.5Z" fill="#747775"/></svg>
<div class="a" style="left:0px;top:820px;width:1600px;height:30px;background:#f9fbfd;"></div>
<div class="a" style="left:0px;top:820px;width:1600px;height:1px;background:#e1e3e1;"></div>
<svg class="a" style="left:46.5px;top:831.5px;" width="10" height="10" viewBox="0 0 10 10"><path d="M5 1 V9 M1 5 H9" stroke="#444746" stroke-width="1.2"/></svg>
<svg class="a" style="left:78.0px;top:830.8px;" width="14" height="11" viewBox="0 0 14 11"><path d="M1.5 2 H12.5 M1.5 5.5 H12.5 M1.5 9 H12.5" stroke="#444746" stroke-width="1.2"/></svg>
<div class="a" style="left:682px;top:821px;width:67.5px;height:29px;background:#e1e9f7;"></div>
<div class="a" style="left:112.5px;top:847.5px;width:70.5px;height:2.5px;background:#3aa757;"></div>
<div class="t " style="left:122.50px;top:830.84px;font-size:12px;line-height:12px;color:#444746;transform:scaleX(0.9481);transform-origin:left;-webkit-text-stroke:0.25px #444746;">MENU</div>
<svg class="a" style="left:166.0px;top:834.8px;" width="8" height="4.5" viewBox="0 0 8 4.5"><path d="M0.5 0.5 L4 4 L7.5 0.5Z" fill="#444746"/></svg>
<div class="t " style="left:194.00px;top:830.84px;font-size:12px;line-height:12px;color:#444746;transform:scaleX(0.9811);transform-origin:left;-webkit-text-stroke:0.25px #444746;">Cad_P</div>
<svg class="a" style="left:239.0px;top:834.8px;" width="8" height="4.5" viewBox="0 0 8 4.5"><path d="M0.5 0.5 L4 4 L7.5 0.5Z" fill="#444746"/></svg>
<div class="t " style="left:267.50px;top:830.84px;font-size:12px;line-height:12px;color:#444746;transform:scaleX(0.9949);transform-origin:left;-webkit-text-stroke:0.25px #444746;">Cad_In</div>
<svg class="a" style="left:316.0px;top:834.8px;" width="8" height="4.5" viewBox="0 0 8 4.5"><path d="M0.5 0.5 L4 4 L7.5 0.5Z" fill="#444746"/></svg>
<div class="t " style="left:344.00px;top:830.84px;font-size:12px;line-height:12px;color:#444746;-webkit-text-stroke:0.25px #444746;">Cad_Im</div>
<svg class="a" style="left:393.5px;top:834.8px;" width="8" height="4.5" viewBox="0 0 8 4.5"><path d="M0.5 0.5 L4 4 L7.5 0.5Z" fill="#444746"/></svg>
<div class="t " style="left:423.75px;top:830.84px;font-size:12px;line-height:12px;color:#444746;transform:scaleX(0.9879);transform-origin:left;-webkit-text-stroke:0.25px #444746;">Con_A</div>
<svg class="a" style="left:469.0px;top:834.8px;" width="8" height="4.5" viewBox="0 0 8 4.5"><path d="M0.5 0.5 L4 4 L7.5 0.5Z" fill="#444746"/></svg>
<div class="t " style="left:497.50px;top:830.84px;font-size:12px;line-height:12px;color:#444746;transform:scaleX(0.9675);transform-origin:left;-webkit-text-stroke:0.25px #444746;">Con_V</div>
<svg class="a" style="left:541.5px;top:834.8px;" width="8" height="4.5" viewBox="0 0 8 4.5"><path d="M0.5 0.5 L4 4 L7.5 0.5Z" fill="#444746"/></svg>
<div class="t " style="left:570.50px;top:830.84px;font-size:12px;line-height:12px;color:#444746;transform:scaleX(0.8943);transform-origin:left;-webkit-text-stroke:0.25px #444746;">CR</div>
<svg class="a" style="left:595.0px;top:834.8px;" width="8" height="4.5" viewBox="0 0 8 4.5"><path d="M0.5 0.5 L4 4 L7.5 0.5Z" fill="#444746"/></svg>
<div class="t " style="left:623.00px;top:830.84px;font-size:12px;line-height:12px;color:#444746;transform:scaleX(0.9408);transform-origin:left;-webkit-text-stroke:0.25px #444746;">Rel_G</div>
<svg class="a" style="left:664.0px;top:834.8px;" width="8" height="4.5" viewBox="0 0 8 4.5"><path d="M0.5 0.5 L4 4 L7.5 0.5Z" fill="#444746"/></svg>
<div class="t " style="left:692.00px;top:830.84px;font-size:12px;line-height:12px;color:#1b5bbd;transform:scaleX(0.9790);transform-origin:left;-webkit-text-stroke:0.5px #1b5bbd;">Rel_P</div>
<svg class="a" style="left:732.8px;top:834.8px;" width="8" height="4.5" viewBox="0 0 8 4.5"><path d="M0.5 0.5 L4 4 L7.5 0.5Z" fill="#1b5bbd"/></svg>
<div class="t " style="left:760.75px;top:830.84px;font-size:12px;line-height:12px;color:#444746;transform:scaleX(0.9549);transform-origin:left;-webkit-text-stroke:0.25px #444746;">Rel_I</div>
<svg class="a" style="left:794.8px;top:834.8px;" width="8" height="4.5" viewBox="0 0 8 4.5"><path d="M0.5 0.5 L4 4 L7.5 0.5Z" fill="#444746"/></svg>
<div class="t " style="left:825.00px;top:830.84px;font-size:12px;line-height:12px;color:#444746;transform:scaleX(0.9729);transform-origin:left;-webkit-text-stroke:0.25px #444746;">Dash1</div>
<svg class="a" style="left:867.8px;top:834.8px;" width="8" height="4.5" viewBox="0 0 8 4.5"><path d="M0.5 0.5 L4 4 L7.5 0.5Z" fill="#444746"/></svg>
<div class="t " style="left:895.75px;top:830.84px;font-size:12px;line-height:12px;color:#444746;transform:scaleX(1.0234);transform-origin:left;-webkit-text-stroke:0.25px #444746;">Dash2</div>
<svg class="a" style="left:939.8px;top:834.8px;" width="8" height="4.5" viewBox="0 0 8 4.5"><path d="M0.5 0.5 L4 4 L7.5 0.5Z" fill="#444746"/></svg>
<div class="t " style="left:968.00px;top:830.84px;font-size:12px;line-height:12px;color:#444746;transform:scaleX(1.0306);transform-origin:left;-webkit-text-stroke:0.25px #444746;">Dash3</div>
<svg class="a" style="left:1012.0px;top:834.8px;" width="8" height="4.5" viewBox="0 0 8 4.5"><path d="M0.5 0.5 L4 4 L7.5 0.5Z" fill="#444746"/></svg>
<div class="t " style="left:1040.75px;top:830.84px;font-size:12px;line-height:12px;color:#444746;transform:scaleX(0.9945);transform-origin:left;-webkit-text-stroke:0.25px #444746;">INI</div>
<svg class="a" style="left:1064.8px;top:834.8px;" width="8" height="4.5" viewBox="0 0 8 4.5"><path d="M0.5 0.5 L4 4 L7.5 0.5Z" fill="#444746"/></svg>
<div class="t " style="left:1093.75px;top:830.84px;font-size:12px;line-height:12px;color:#444746;transform:scaleX(0.9325);transform-origin:left;-webkit-text-stroke:0.25px #444746;">SUG</div>
<svg class="a" style="left:1127.0px;top:834.8px;" width="8" height="4.5" viewBox="0 0 8 4.5"><path d="M0.5 0.5 L4 4 L7.5 0.5Z" fill="#444746"/></svg>
<svg class="a" style="left:1573.0px;top:832.0px;" width="8" height="11" viewBox="0 0 8 11"><path d="M6 1 L1.5 5.5 L6 10" stroke="#444746" stroke-width="1.4" fill="none"/></svg>
</body></html>
